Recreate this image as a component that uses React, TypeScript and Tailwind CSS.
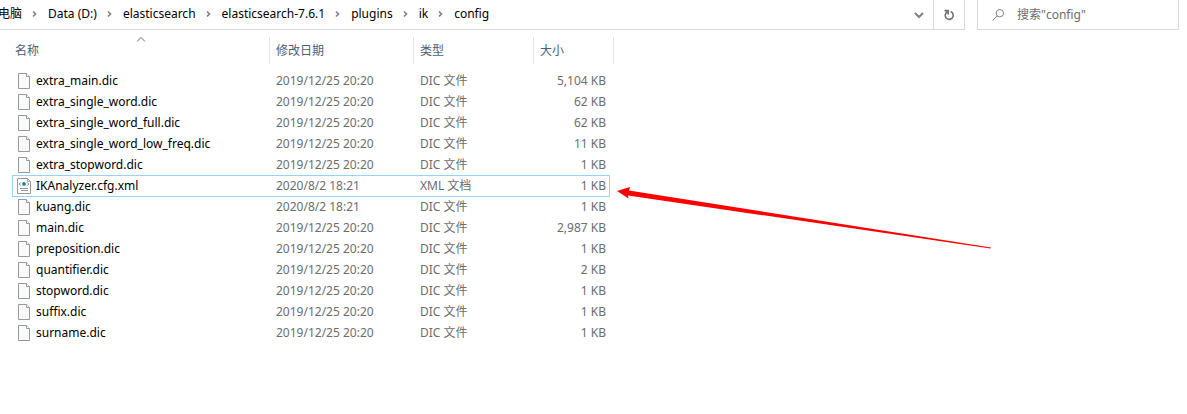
import React from "react";

type Entry = { name: string; date: string; type: string; size: string; xml?: boolean };

const D = "2019/12/25 20:20";
const DIC = "DIC 文件";

const entries: Entry[] = [
  { name: "extra_main.dic", date: D, type: DIC, size: "5,104 KB" },
  { name: "extra_single_word.dic", date: D, type: DIC, size: "62 KB" },
  { name: "extra_single_word_full.dic", date: D, type: DIC, size: "62 KB" },
  { name: "extra_single_word_low_freq.dic", date: D, type: DIC, size: "11 KB" },
  { name: "extra_stopword.dic", date: D, type: DIC, size: "1 KB" },
  { name: "IKAnalyzer.cfg.xml", date: "2020/8/2 18:21", type: "XML 文档", size: "1 KB", xml: true },
  { name: "kuang.dic", date: "2020/8/2 18:21", type: DIC, size: "1 KB" },
  { name: "main.dic", date: D, type: DIC, size: "2,987 KB" },
  { name: "preposition.dic", date: D, type: DIC, size: "1 KB" },
  { name: "quantifier.dic", date: D, type: DIC, size: "2 KB" },
  { name: "stopword.dic", date: D, type: DIC, size: "1 KB" },
  { name: "suffix.dic", date: D, type: DIC, size: "1 KB" },
  { name: "surname.dic", date: D, type: DIC, size: "1 KB" },
];

const crumbs = ["电脑", "Data (D:)", "elasticsearch", "elasticsearch-7.6.1", "plugins", "ik", "config"];

function CrumbChevron() {
  return (
    <svg className="mx-[9px] h-2 w-2 shrink-0" viewBox="0 0 8 8" fill="none" stroke="#808080" strokeWidth="1.6" aria-hidden="true">
      <path d="M2 1.5 4.5 4 2 6.5" />
    </svg>
  );
}

function FileIcon() {
  return (
    <svg className="h-4 w-4 shrink-0" viewBox="0 0 16 16" fill="none" aria-hidden="true">
      <path d="M2.5.5h8l3 3v12h-11z" fill="#f9fafb" stroke="#999" />
      <path d="M10.5.5v3h3" fill="#fff" stroke="#999" />
    </svg>
  );
}

function XmlIcon() {
  return (
    <svg className="h-4 w-4 shrink-0" viewBox="0 0 16 16" fill="none" aria-hidden="true">
      <path d="M1.5.5h10l3 3v12h-13z" fill="#fff" stroke="#999" />
      <path d="M11.5.5v3h3" stroke="#aaa" />
      <path d="M4.7 4.5 3.2 6l1.5 1.5M11.3 4.5 12.8 6l-1.5 1.5" stroke="#777" />
      <circle cx="8" cy="6" r="2" fill="#2b9fb4" />
      <path d="M7 4.5 8.8 5.2 7.8 7z" fill="#245f8f" />
      <path d="M4 10.5h8M5 12.5h7" stroke="#999" />
    </svg>
  );
}

export default function App() {
  return (
    <main className="relative bg-white font-['Noto_Sans','Noto_Sans_CJK_SC',sans-serif] text-xs text-black">
      <header className="flex h-[30px] pr-2">
        <div className="flex min-w-0 flex-1 border-r border-b border-[#d9d9d9]">
          <nav className="-ml-0.5 flex min-w-0 flex-1 items-center overflow-hidden pb-0.5 whitespace-nowrap" aria-label="路径">
            {crumbs.map((c, i) => (
              <React.Fragment key={c}>
                {i > 0 && <CrumbChevron />}
                <a href="#">{c}</a>
              </React.Fragment>
            ))}
          </nav>
          <button type="button" className="flex w-7 items-center justify-center" aria-label="展开">
            <svg className="h-2.5 w-2.5" viewBox="0 0 10 10" fill="none" stroke="#808080" strokeWidth="2" aria-hidden="true">
              <path d="M1 3 5 7 9 3" />
            </svg>
          </button>
          <button type="button" className="flex w-[31px] items-center justify-center border-l border-[#d9d9d9]" aria-label="刷新">
            <svg className="h-3 w-3" viewBox="0 0 12 12" fill="none" stroke="#707070" strokeWidth="1.6" aria-hidden="true">
              <path d="M7.6 2.6A4 4 0 1 1 2.8 4.3L5 2.2" />
              <path d="M1.5 1.6H5.2V5.4" />
            </svg>
          </button>
        </div>
        <label className="ml-3 flex w-[202px] items-center gap-[13px] border-x border-b border-[#d9d9d9] pl-3.5">
          <svg className="h-3 w-3 shrink-0" viewBox="0 0 12 12" fill="none" stroke="#858585" aria-hidden="true">
            <circle cx="7.8" cy="4.2" r="3.7" />
            <path d="M5.1 6.9.5 11.5" />
          </svg>
          <input
            className="w-full min-w-0 bg-transparent outline-none placeholder:text-[#6d6d6d]"
            type="text"
            aria-label="搜索"
            placeholder={'搜索"config"'}
          />
        </label>
      </header>

      <div className="overflow-x-auto pt-[7px] pl-3">
        <table className="w-[602px] table-fixed border-collapse">
          <colgroup>
            <col className="w-[258px]" />
            <col className="w-36" />
            <col className="w-[120px]" />
            <col className="w-20" />
          </colgroup>
          <thead>
            <tr className="h-[27px] text-left text-[#4c607a]">
              {["名称", "修改日期", "类型", "大小"].map((h, i) => (
                <th key={h} scope="col" className="relative p-0 font-normal">
                  <button
                    type="button"
                    className={`flex h-[27px] w-full items-center border-r border-[#e5e5e5] ${i === 0 ? "pl-[3px]" : "pl-1.5"}`}
                  >
                    {h}
                  </button>
                  {i === 0 && (
                    <svg
                      className="absolute top-0 left-1/2 h-[5px] w-[9px] -translate-x-1/2"
                      viewBox="0 0 9 5"
                      fill="none"
                      stroke="#666"
                      aria-hidden="true"
                    >
                      <path d="M.5 4.5l4-4 4 4" />
                    </svg>
                  )}
                </th>
              ))}
            </tr>
          </thead>
          <tbody className="text-[#6d6d6d] before:block before:h-1.5 before:content-['']">
            {entries.map((e) => (
              <tr
                key={e.name}
                className={
                  e.xml
                    ? "relative h-[21px] after:absolute after:top-0 after:right-1 after:-bottom-px after:left-0 after:border after:border-[#99d1ff] after:content-['']"
                    : "h-[21px]"
                }
              >
                <td className="p-0 pl-1">
                  <div className="flex items-center gap-1 text-black">
                    {e.xml ? <XmlIcon /> : <FileIcon />}
                    {e.name}
                  </div>
                </td>
                <td className="p-0 pl-1.5">{e.date}</td>
                <td className="p-0 pl-1.5">{e.type}</td>
                <td className="p-0 pr-2 text-right">{e.size}</td>
              </tr>
            ))}
          </tbody>
        </table>
      </div>

      <svg className="pointer-events-none absolute top-[186px] left-[617px] h-16 w-[375px]" viewBox="0 0 375 64" aria-hidden="true">
        <path d="M0 5 13 1 12 4.5 374 61.5 373.5 62.5 11 9.5 11.5 12.5z" fill="#f00" />
      </svg>
    </main>
  );
}
